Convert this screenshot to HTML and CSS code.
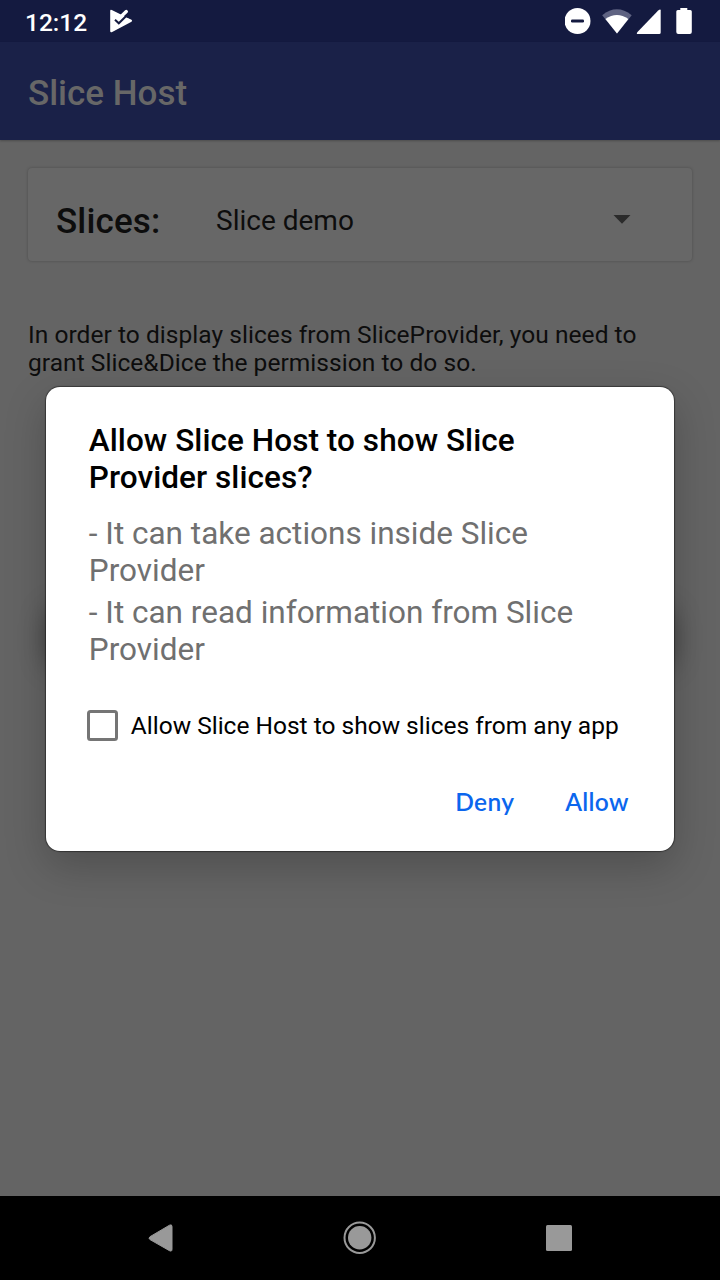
FILE: index.html
```html
<!DOCTYPE html>
<html lang="en">
<head>
<meta charset="utf-8">
<title>Slice Host</title>
<link rel="stylesheet" href="styles.css">
</head>
<body>
<div class="screen">
  <header class="status-bar">
    <span class="clock">12:12</span>
    <svg class="task-icon" width="25" height="24" viewBox="0 0 25 24">
      <path d="M2.200 2Q2.200 .2 3.800 1L23.500 10.700Q24.800 11.700 23.500 12.700L4.200 23Q2.200 23.800 2.200 22Z" fill="#fff"/>
      <path d="M11 9.500L18.300 2.600" stroke="#fff" stroke-width="3.400" stroke-linecap="round"/>
      <path d="M7 10.800L10.800 14.300L20.500 4.800" fill="none" stroke="#141a40" stroke-width="2"/>
      <path d="M17.500 7.800L20.600 4.800L22 9.500L19 8.400Z" fill="#141a40"/>
    </svg>
    <svg class="system-icons" width="130" height="30" viewBox="0 0 130 30">
      <circle cx="12.500" cy="14" r="13" fill="#fff"/>
      <rect x="6" y="12.500" width="13" height="3" rx="1.200" fill="#141a40"/>
      <path d="M37.200 8.200Q51.800-3.600 66.700 8.200L52 26.500Z" fill="#5f6382"/>
      <path d="M40.400 12Q51.900 4.200 63.400 12L52 26.500Z" fill="#fff"/>
      <path d="M95.700 3.500V25.500Q95.700 27 94.200 27H73.200Q70.700 27 72.500 25L93.200 3.500Q95.700 1.500 95.700 3.500Z" fill="#fff"/>
      <path d="M115.300 1h7v2h3q1.500 0 1.500 1.500v20.500q0 2-2 2h-11.500q-2 0-2-2V4.500q0-1.500 1.500-1.500h2.500z" fill="#fff"/>
    </svg>
  </header>
  <div class="app-bar"><h1 class="app-title">Slice Host</h1></div>
  <main class="content">
    <section class="picker">
      <span class="picker-label">Slices:</span>
      <span class="picker-value">Slice demo</span>
      <svg class="caret" width="18" height="9" viewBox="0 0 18 9"><path d="M.5 0H17.500L9 8.800Z" fill="#2b2b2b"/></svg>
    </section>
    <p class="notice">In order to display slices from SliceProvider, you need to<br>grant Slice&amp;Dice the permission to do so.</p>
    <div class="slice-shadow"></div>
    <section class="dialog" role="dialog">
      <h2 class="dialog-title">Allow Slice Host to show Slice<br>Provider slices?</h2>
      <p class="reason first">- It can take actions inside Slice<br>Provider</p>
      <p class="reason second">- It can read information from Slice<br>Provider</p>
      <label class="check-row"><span class="box"></span><span class="check-text">Allow Slice Host to show slices from any app</span></label>
      <div class="actions"><span class="deny">Deny</span><span class="allow">Allow</span></div>
    </section>
  </main>
  <nav class="nav-bar">
    <svg class="nav-icons" width="720" height="84" viewBox="0 0 720 84">
      <path d="M150 40.700L169.500 29.200Q172 28 172 30.500V53.200Q172 56 169.500 54.700L150 43.600Q148 42.200 150 40.700Z" fill="#999" stroke="#999" stroke-width="1"/>
      <circle cx="359.700" cy="41.700" r="15.200" fill="none" stroke="#999" stroke-width="2"/>
      <circle cx="359.700" cy="41.700" r="11.700" fill="#999"/>
      <rect x="546" y="29" width="26" height="26" rx="1.500" fill="#999"/>
    </svg>
  </nav>
</div>
</body>
</html>
```
FILE: styles.css
```css
* { box-sizing: border-box; }
body { margin: 0; font-family: Roboto, sans-serif; }
h1, h2, p { margin: 0; }
svg { display: block; flex: none; }
.screen { width: 720px; height: 1280px; display: flex; flex-direction: column; background: #646464; overflow: hidden; }
.status-bar { height: 42px; display: flex; align-items: flex-start; background: #141a40; padding: 7px 26px 0 25px; }
.clock { width: 83px; font-size: 24.5px; line-height: 32px; font-weight: 500; color: #fff; white-space: nowrap; }
.task-icon { margin-top: 2px; }
.system-icons { margin-left: auto; margin-right: -1px; }
.app-bar { height: 98px; display: flex; align-items: center; padding: 6px 28px 0; background: #1a2148; box-shadow: 0 1px 2px rgba(0,0,0,.25); z-index: 1; }
.app-title { font-size: 35px; line-height: 42px; font-weight: 500; color: #676767; white-space: nowrap; }
.content { position: relative; height: 1056px; padding: 28px 28px 0; }
.picker { height: 93px; display: flex; align-items: center; padding: 12px 61px 0 28px; background: #676767; border-radius: 4px; box-shadow: 0 0 3px rgba(0,0,0,.26); }
.picker-label { width: 160px; padding-top: 1px; font-size: 35px; font-weight: 500; letter-spacing: .15px; color: #0d0d0d; }
.picker-value { font-size: 28px; color: #0d0d0d; }
.caret { margin-left: auto; margin-top: -2px; }
.notice { margin-top: 60px; font-size: 24.5px; line-height: 28.4px; letter-spacing: .05px; color: #0d0d0d; white-space: nowrap; }
.slice-shadow { position: absolute; left: 48px; top: 470px; width: 624px; height: 56px; border-radius: 10px; box-shadow: 0 0 28px rgba(0,0,0,.42); }
.dialog { position: absolute; left: 46.3px; top: 246.5px; width: 627.4px; height: 464.500px; border-radius: 14px; background: #fff; padding: 36.5px 42px 0 42.500px; box-shadow: 0 0 1px 1px rgba(0,0,0,.42), 0 15px 42px rgba(0,0,0,.22); white-space: nowrap; }
.dialog-title { font-size: 31.5px; line-height: 36.7px; font-weight: 500; letter-spacing: .06px; color: #000; }
.reason { font-size: 31.5px; line-height: 36.7px; color: #707070; }
.first { margin-top: 20px; }
.second { margin-top: 5.500px; }
.check-row { display: flex; align-items: center; margin-top: 39px; height: 36px; font-size: 24.5px; color: #000; }
.box { width: 31px; height: 31px; margin-left: -2px; margin-right: 13px; border: 3px solid #757575; border-radius: 3.500px; flex: none; }
.actions { display: flex; justify-content: flex-end; gap: 51px; margin-top: 41px; padding-right: 3px; font-family: Lato, sans-serif; font-size: 24.5px; line-height: 34px; font-weight: 600; letter-spacing: .3px; color: #0b66ee; }
.nav-bar { height: 84px; background: #000; }
```
